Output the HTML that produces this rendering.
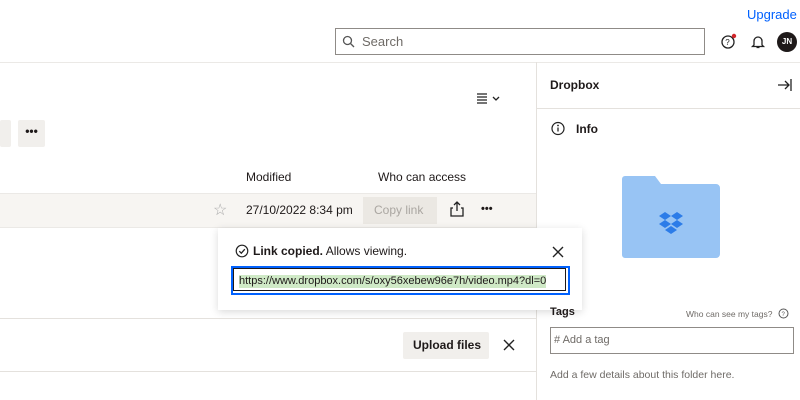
<!DOCTYPE html>
<html><head><style>
body{margin:0;width:800px;height:400px;overflow:hidden;background:#fff;font-family:"Liberation Sans",sans-serif;color:#1e1919;position:relative}
.a{position:absolute}
.t{font-size:12px}
.btn{background:#f1efec;border-radius:2px}
</style></head><body>
<div class="a" style="left:747px;top:7px;font-size:13px;color:#0061fe">Upgrade</div>
<div class="a" style="left:335px;top:28px;width:368px;height:25px;border:1px solid #8f8b87"></div>
<svg class="a" style="left:342px;top:35px" width="13" height="13"><circle cx="5.5" cy="5.5" r="4" fill="none" stroke="#555" stroke-width="1.3"/><path d="M8.5 8.5L12 12" stroke="#555" stroke-width="1.3"/></svg>
<div class="a" style="left:362px;top:34px;font-size:13px;color:#6f6b67">Search</div>
<svg class="a" style="left:720px;top:33px" width="18" height="18"><circle cx="8" cy="9" r="6" fill="none" stroke="#222" stroke-width="1.3"/><text x="5.3" y="12" font-size="8" font-family="Liberation Sans" fill="#222">?</text><circle cx="14" cy="3" r="2.2" fill="#d1262b"/></svg>
<svg class="a" style="left:750px;top:34px" width="16" height="16"><path d="M4 11V7a4 4 0 0 1 8 0v4l1.5 1.5h-11z M6.5 13.5h3" fill="none" stroke="#222" stroke-width="1.3"/></svg>
<div class="a" style="left:777px;top:32px;width:20px;height:20px;border-radius:50%;background:#1e1919;color:#fff;font-size:8px;font-weight:bold;text-align:center;line-height:20px">JN</div>
<div class="a" style="left:0;top:62px;width:800px;height:1px;background:#ebe9e6"></div>
<div class="a" style="left:536px;top:62px;width:1px;height:338px;background:#e4e1dd"></div>
<div class="a t" style="left:550px;top:78px;font-weight:bold">Dropbox</div>
<svg class="a" style="left:777px;top:78px" width="16" height="14"><path d="M1 7h11M8 3l4 4-4 4M14 1v12" fill="none" stroke="#222" stroke-width="1.3"/></svg>
<div class="a" style="left:537px;top:108px;width:263px;height:1px;background:#e4e1dd"></div>
<svg class="a" style="left:551px;top:121px" width="15" height="15"><circle cx="7" cy="7.5" r="6" fill="none" stroke="#222" stroke-width="1.2"/><path d="M7 6.5v4" stroke="#222" stroke-width="1.3"/><circle cx="7" cy="4.5" r=".9" fill="#222"/></svg>
<div class="a t" style="left:576px;top:122px;font-weight:bold">Info</div>
<svg class="a" style="left:622px;top:176px" width="100" height="84"><path d="M3 0h30l6 8h55a4 4 0 0 1 4 4v66a4 4 0 0 1-4 4H3a3 3 0 0 1-3-3V3a3 3 0 0 1 3-3z" fill="#98c4f4"/><g fill="#2c7ce8"><path d="M43 36l6 4-6 4-6-4z M55 36l6 4-6 4-6-4z M43 44l6 4-6 4-6-4z M55 44l6 4-6 4-6-4z M49 50l6 4-6 4-6-4z"/></g></svg>
<svg class="a" style="left:476px;top:92px" width="30" height="14"><path d="M1 2h10M1 5h10M1 8h10M1 11h10" stroke="#222" stroke-width="1.2"/><path d="M17 5l3 3 3-3" fill="none" stroke="#222" stroke-width="1.3"/></svg>
<div class="a btn" style="left:0;top:120px;width:11px;height:27px"></div>
<div class="a btn" style="left:18px;top:120px;width:27px;height:27px;text-align:center;font-weight:bold;font-size:12px;line-height:22px">•••</div>
<div class="a t" style="left:246px;top:170px">Modified</div>
<div class="a t" style="left:378px;top:170px">Who can access</div>
<div class="a" style="left:0;top:193px;width:536px;height:33px;background:#f7f5f2;border-top:1px solid #ebe9e6;border-bottom:1px solid #ebe9e6"></div>
<div class="a" style="left:213px;top:200px;font-size:16px;color:#aaa">☆</div>
<div class="a t" style="left:246px;top:203px;width:110px;overflow:hidden;white-space:nowrap">27/10/2022 8:34 pm</div>
<div class="a" style="left:363px;top:197px;width:74px;height:27px;background:#ebe8e3"></div>
<div class="a t" style="left:374px;top:203px;color:#aaa6a1">Copy link</div>
<svg class="a" style="left:450px;top:201px" width="14" height="16"><path d="M7 1v9M4 4l3-3 3 3M3 7H1v8h12V7h-2" fill="none" stroke="#222" stroke-width="1.3"/></svg>
<div class="a" style="left:481px;top:203px;font-size:11px;font-weight:bold">•••</div>
<div class="a" style="left:218px;top:228px;width:364px;height:82px;background:#fff;box-shadow:0 2px 8px rgba(0,0,0,.15)"></div>
<svg class="a" style="left:235px;top:244px" width="14" height="14"><circle cx="7" cy="7" r="5.8" fill="none" stroke="#222" stroke-width="1.2"/><path d="M4.3 7.2l2 2 3.5-4" fill="none" stroke="#222" stroke-width="1.3"/></svg>
<div class="a t" style="left:253px;top:244px"><b>Link copied.</b> Allows viewing.</div>
<svg class="a" style="left:552px;top:246px" width="12" height="12"><path d="M1 1l10 10M11 1L1 11" stroke="#222" stroke-width="1.4"/></svg>
<div class="a" style="left:231px;top:266px;width:335px;height:25px;border:2px solid #0061fe"></div>
<div class="a" style="left:233px;top:268px;width:333px;height:23px;border:1px solid #1e1919;box-sizing:border-box"></div>
<div class="a" style="left:239px;top:275px;font-size:11px;background:#cfe9c6;line-height:13px">https://www.dropbox.com/s/oxy56xebew96e7h/video.mp4?dl=0</div>
<div class="a" style="left:0;top:318px;width:536px;height:1px;background:#e4e1dd"></div>
<div class="a btn" style="left:403px;top:332px;width:86px;height:27px"></div>
<div class="a t" style="left:413px;top:338px;font-weight:bold">Upload files</div>
<svg class="a" style="left:503px;top:339px" width="12" height="12"><path d="M1 1l10 10M11 1L1 11" stroke="#222" stroke-width="1.4"/></svg>
<div class="a" style="left:0;top:371px;width:536px;height:1px;background:#e4e1dd"></div>
<div class="a" style="left:550px;top:306px;font-size:11px;font-weight:bold">Tags</div>
<div class="a" style="left:686px;top:309px;font-size:8.5px;color:#6f6b67">Who can see my tags?</div>
<svg class="a" style="left:778px;top:308px" width="11" height="11"><circle cx="5.5" cy="5.5" r="4.5" fill="none" stroke="#555"/><text x="3.5" y="8" font-size="6" fill="#555" font-family="Liberation Sans">?</text></svg>
<div class="a" style="left:550px;top:327px;width:242px;height:25px;border:1px solid #8f8b87"></div>
<div class="a" style="left:554px;top:334px;font-size:11px;color:#6f6b67"># Add a tag</div>
<div class="a" style="left:550px;top:369px;font-size:10.5px;color:#6f6b67">Add a few details about this folder here.</div>
</body></html>
